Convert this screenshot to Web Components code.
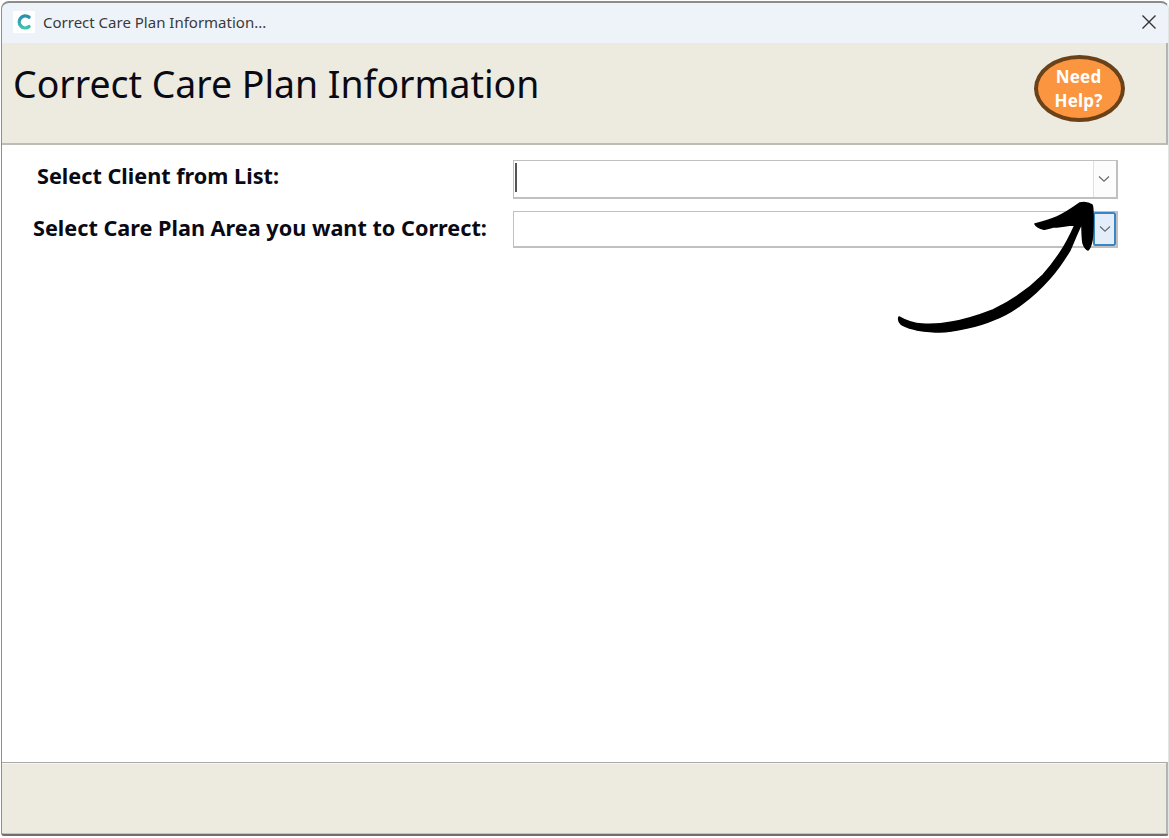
<!DOCTYPE html>
<html lang="en"><head><meta charset="utf-8"><title>Correct Care Plan Information</title>
<style>
html,body{margin:0;padding:0;background:#fff;height:100%}
body{width:1169px;height:838px;overflow:hidden;font-family:"Noto Sans","Open Sans",sans-serif}
</style></head><body>
<care-window>
  <window-titlebar slot="titlebar">Correct Care Plan Information...</window-titlebar>
  <page-header slot="header">Correct Care Plan Information</page-header>
  <combo-row label="Select Client from List:" indent="37" gap="5" caret></combo-row>
  <combo-row label="Select Care Plan Area you want to Correct:" indent="33" gap="6" focused></combo-row>
  <hand-arrow slot="overlay"></hand-arrow>
</care-window>
<script>
function def(name, html, init){
  customElements.define(name, class extends HTMLElement{
    constructor(){super();this.attachShadow({mode:'open'}).innerHTML=html;}
    connectedCallback(){ if(init) init.call(this,this.shadowRoot); }
  });
}
def('care-window',`<style>
:host{display:flex;flex-direction:column;position:relative;box-sizing:border-box;width:1169px;height:838px;background:#fff;padding:2px 1px 3px 2px}
.frame{position:absolute;inset:1px 0 2px 1px;border:1px solid #8f8f8f;border-top:2px solid #8c8c8c;border-bottom:2px solid #6f6f6f;border-right-color:#e4e4e4;border-radius:8px 8px 3px 3px;pointer-events:none}
.body{flex:1;display:flex;flex-direction:column;gap:12px;padding-top:15px;background:#fff;min-height:0}
.foot{height:73px;flex:none;box-sizing:border-box;background:#edebe0;border-top:1px solid #a9a9a9;box-shadow:inset 0 1px 0 #f7f6f0;border-bottom:2px solid #c3c2bc;border-right:2px solid #b4b4b4}
</style>
<slot name="titlebar"></slot><slot name="header"></slot>
<div class="body"><slot></slot></div>
<div class="foot"></div>
<div class="frame"></div>
<slot name="overlay"></slot>`);
def('window-titlebar',`<style>
:host{display:flex;align-items:center;height:41px;flex:none;background:#eef3f9;border-radius:8px 8px 0 0;font:15px "Noto Sans","Open Sans",sans-serif;color:#3a3a3a;box-sizing:border-box;padding:0 10px 0 11px}
.ic{width:22px;height:22px;background:#fff;display:flex;align-items:center;justify-content:center;flex:none;margin-right:8px;position:relative;top:-1px}
.t{flex:1;white-space:nowrap;position:relative;top:-1px}
.x{width:18px;height:18px;flex:none;position:relative;top:-1px}
</style>
<div class="ic"><svg width="18" height="18" viewBox="0 0 18 18"><defs><linearGradient id="g" x1="0" y1="0" x2="0" y2="1"><stop offset="0" stop-color="#2a8fae"/><stop offset="1" stop-color="#3cc4b0"/></linearGradient></defs><path d="M14 4.2A6 6 0 1 0 14 13.6" fill="none" stroke="url(#g)" stroke-width="3.4" stroke-linecap="round"/></svg></div>
<span class="t"><slot></slot></span>
<svg class="x" viewBox="0 0 18 18"><path d="M2.5 2.5L15.5 15.5M15.5 2.5L2.5 15.5" stroke="#333" stroke-width="1.4" fill="none"/></svg>`);
def('page-header',`<style>
:host{display:flex;justify-content:space-between;height:102px;flex:none;box-sizing:border-box;background:#edebe0;border-bottom:2px solid #bdbdb8;border-right:2px solid #b4b4b4;padding:0 41px 0 11px;color:#0a0a14}
.t{font:37.4px/1 "Noto Sans","Open Sans",sans-serif;margin-top:22px;white-space:nowrap}
.help{box-sizing:border-box;width:91px;height:67px;margin-top:12px;border-radius:50%;border:4px solid #6b4118;background:#fb9540;color:#fff;font:bold 17px/24px "Noto Sans",sans-serif;text-align:center;display:flex;align-items:center;justify-content:center;letter-spacing:.2px;padding-right:2px}
</style>
<div class="t"><slot></slot></div>
<div class="help">Need<br>Help?</div>`);
def('combo-row',`<style>
:host{display:flex;align-items:flex-start;flex:none;padding-right:50px;color:#0a0a14}
.l{font:bold 21.65px/1 "Noto Sans","Open Sans",sans-serif;white-space:nowrap;width:511px;flex:none;box-sizing:border-box}
.box{flex:1;height:39px;box-sizing:border-box;border:2px solid #c0c0c0;border-top-width:1px;border-left-width:1px;background:#fff;display:flex;justify-content:flex-end;position:relative}
.caret{position:absolute;left:1px;top:2px;width:2px;height:29px;background:#555;display:none}
:host([caret]) .caret{display:block}
.btn{width:23px;padding-right:2px;border-left:1px solid #e0e0e0;background:#fcfcfc;display:flex;align-items:center;justify-content:center;box-sizing:border-box}
:host([focused]) .box{height:37px}
:host([focused]) .btn{border:2px solid #3a86c4;background:#e3eefa;border-radius:2px;padding-right:0}
</style>
<div class="l"></div>
<div class="box"><span class="caret"></span><div class="btn"><svg width="12" height="8" viewBox="0 0 12 8"><path d="M1 1.5L6 6.2L11 1.5" fill="none" stroke="#6d6d6d" stroke-width="1.3"/></svg></div></div>`,
function(s){const l=s.querySelector('.l');l.textContent=this.getAttribute('label');l.style.paddingLeft=this.getAttribute('indent')+'px';l.style.marginLeft='-2px';l.style.marginRight='2px';l.style.paddingTop=this.getAttribute('gap')+'px';});
def('hand-arrow',`<style>
:host{position:absolute;left:880px;top:200px;width:240px;height:150px;display:block;pointer-events:none}
</style>
<svg width="240" height="150" viewBox="0 0 240 150"><path fill="#000" stroke="#000" stroke-width="1.6" stroke-linejoin="round" d="M19 117C26 121 33 124 42 124C52 125 62 124 72 122C85 120 100 115 113 110C130 102 148 90 163 75C172 65 176 59 180 53C186 44 191 34 195 25C186 25 180 27 173 27C169 28 166 30 163 29C159 28 156 26 155 24C163 22 170 20 177 17C186 13 193 8 200 3C205 2 209 3 212 5C213 6 213 9 213 17C213 25 213 33 212 40C211 45 210 48 208 50C205 49 204 46 203 43C202 36 202 29 202 23C197 33 194 41 190 50C184 60 178 69 170 78C162 87 153 96 143 103C134 110 124 116 113 120C104 124 96 126 87 128C78 130 69 132 60 132C52 132 44 131 37 130C30 128 25 127 21 124C19 122 18 120 19 117Z"/></svg>`);
</script>
</body></html>
